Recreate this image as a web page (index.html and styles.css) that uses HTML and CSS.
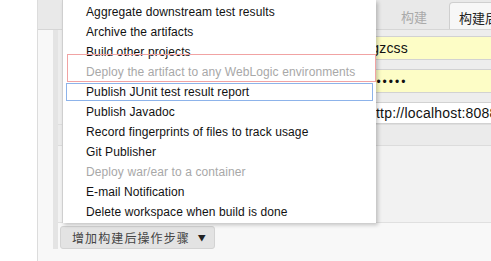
FILE: index.html
```html
<!DOCTYPE html>
<html lang="zh-CN">
<head>
    <meta charset="UTF-8">
    <title>配置 - Jenkins</title>
    <link rel="stylesheet" href="styles.css">
</head>
<body>
    <div class="page">
        <div class="gutter"></div>

        <div class="main">
            <div class="tabbar">
                <span class="tab">构建</span>
                <span class="tab active">构建后操作</span>
            </div>

            <div class="section">
                <div class="fields">
                    <div class="field yellow">xgzcss</div>
                    <div class="field yellow dots">•••••••</div>
                    <div class="field url">http://localhost:8088/</div>
                </div>
                <div class="band"></div>
                <div class="block"></div>
                <div class="actions">
                    <button class="add-btn">增加构建后操作步骤 <span class="caret">▼</span></button>
                </div>
            </div>
        </div>

        <!-- dropdown of the add button -->
        <ul class="menu">
            <li>Aggregate downstream test results</li>
            <li>Archive the artifacts</li>
            <li>Build other projects</li>
            <li class="off">Deploy the artifact to any WebLogic environments</li>
            <li class="focus">Publish JUnit test result report</li>
            <li>Publish Javadoc</li>
            <li>Record fingerprints of files to track usage</li>
            <li>Git Publisher</li>
            <li class="off">Deploy war/ear to a container</li>
            <li>E-mail Notification</li>
            <li>Delete workspace when build is done</li>
            <span class="mark"></span>
        </ul>
    </div>
</body>
</html>
```

FILE: styles.css
```css
body {
    margin: 0;
    background: #fff;
    font-family: "Liberation Sans", Arial, sans-serif;
    overflow: hidden;
}
.page {
    position: relative;
    display: flex;
    height: 261px;
}
.gutter {
    flex: none;
    width: 37px;
    border-right: 1px solid #dcdcdc;
    background: #fff;
}
.main {
    flex: 1;
    min-width: 0;
    display: flex;
    flex-direction: column;
    background: #f8f8f8;
}
.tabbar {
    flex: none;
    height: 30px;
    box-sizing: border-box;
    display: flex;
    align-items: flex-end;
    padding-left: 351px;
    background: #e9e9e9;
    border-bottom: 1px solid #d6d6d6;
    white-space: nowrap;
    overflow: hidden;
    font-family: "Noto Sans CJK SC", sans-serif;
    font-size: 13px;
}
.tab {
    flex: none;
    width: 58px;
    height: 27px;
    box-sizing: border-box;
    padding: 5px 0 0 12px;
    margin-right: 2px;
    color: #aaa;
}
.tab.active {
    width: auto;
    padding-left: 9px;
    color: #222;
    background: #f7f7f7;
    border: 1px solid #cfcfcf;
    border-bottom: none;
    border-radius: 4px 0 0 0;
    margin-bottom: -1px;
    height: 28px;
}
.section {
    margin-left: 15px;
    border-left: 5px solid #e4e4e4;
    min-width: 0;
}
.fields {
    background: #ededed;
    padding-top: 6px;
}
.field {
    margin-left: 301px;
    height: 23px;
    box-sizing: border-box;
    padding: 3px 0 0 4px;
    border: 1px solid #d2d2d2;
    border-right: none;
    background: #fff;
    font-size: 14px;
    letter-spacing: 0.2px;
    color: #111;
    white-space: nowrap;
    overflow: hidden;
    margin-bottom: 9px;
}
.field.yellow {
    background: #fdfdc6;
    height: 24px;
}
.field.dots {
    letter-spacing: 2px;
    font-size: 12px;
    padding-top: 5px;
}
.field.url {
    margin-bottom: 0;
    height: 22px;
    padding: 2px 0 0 8px;
}
.band {
    height: 20px;
    background: #ebebeb;
    border-top: 1px solid #dedede;
    border-bottom: 1px solid #dcdcdc;
}
.block {
    height: 76px;
    background: #f2f2f2;
    border-bottom: 1px solid #e0e0e0;
}
.actions {
    padding: 3px 0 0 2px;
}
.add-btn {
    height: 23px;
    padding: 0 7px 0 11px;
    background: #e3e3e3;
    border: 1px solid #d3d3d3;
    border-radius: 3px;
    color: #444;
    font-family: "Noto Sans CJK SC", sans-serif;
    font-size: 12px;
    letter-spacing: 1.1px;
}
.caret {
    font-size: 8px;
    margin-left: 4px;
    vertical-align: 2px;
    color: #222;
}
.menu {
    position: absolute;
    left: 62px;
    top: 0;
    width: 314px;
    box-sizing: border-box;
    margin: 0;
    padding: 2px 0 1px;
    list-style: none;
    background: #fff;
    border-left: 1px solid #cfcfcf;
    box-shadow: 2px 2px 4px rgba(0, 0, 0, 0.22);
    font-size: 12px;
    letter-spacing: 0.1px;
    color: #111;
}
.menu li {
    height: 20px;
    line-height: 20px;
    padding-left: 23px;
    white-space: nowrap;
}
.menu li.off {
    color: #a8a8a8;
}
.menu li.focus {
    outline: 1px solid #8db3ea;
    outline-offset: -2px;
    margin: 0 2px 0 2px;
    padding-left: 21px;
}
.mark {
    position: absolute;
    left: 4px;
    right: 0;
    top: 54px;
    height: 26px;
    border: 1px solid #f1a3a3;
}
```
